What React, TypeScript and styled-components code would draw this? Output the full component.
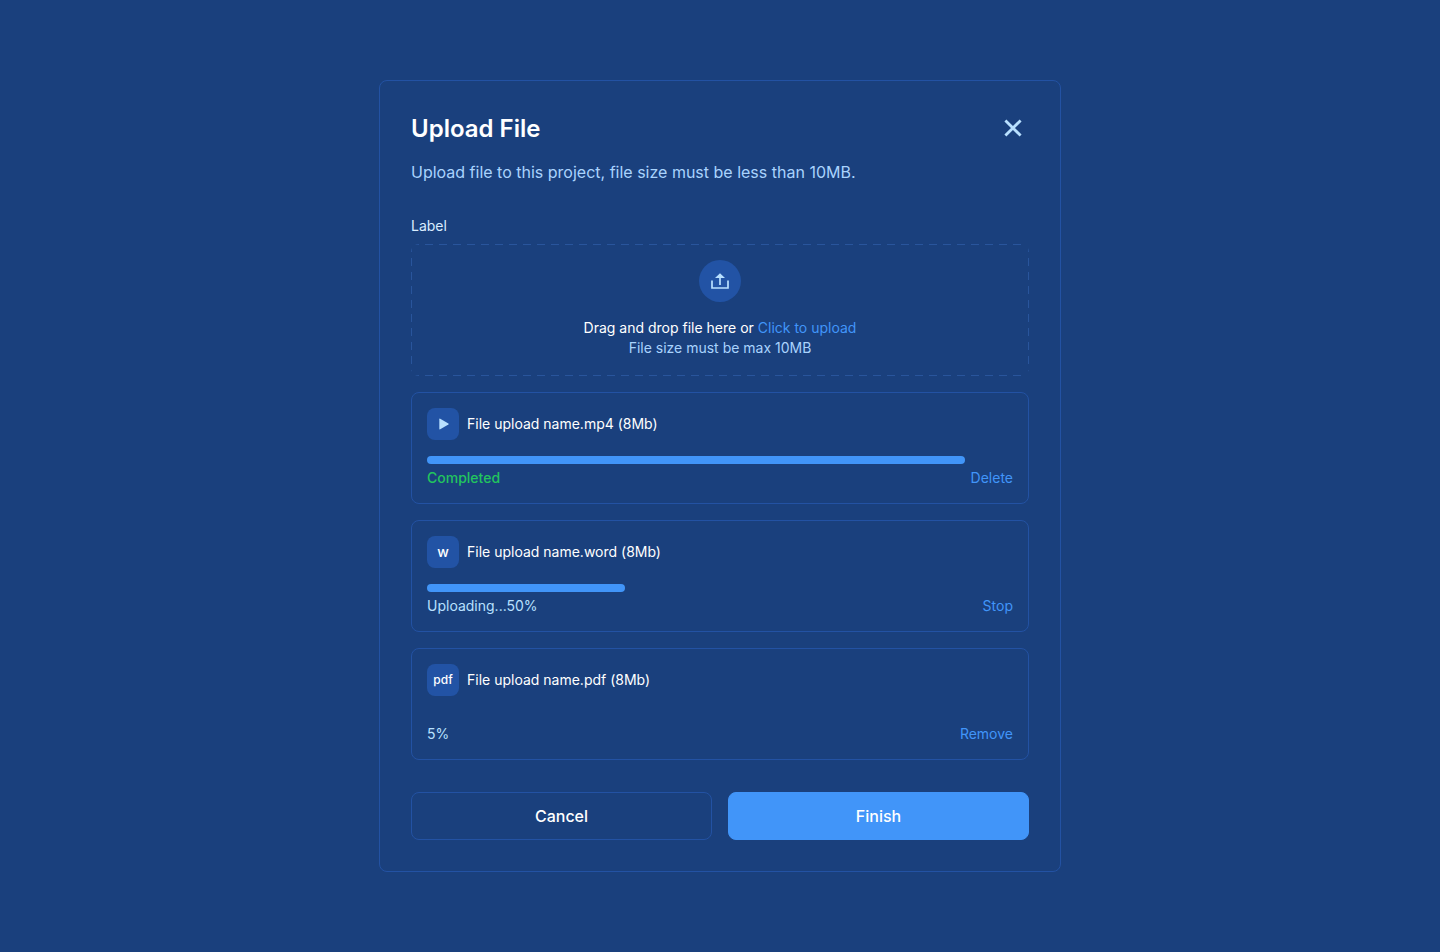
import React from "react";
import styled, { createGlobalStyle } from "styled-components";

const color = {
  page: "#1a407d",
  line: "#2352a3",
  dash: "#29559c",
  tile: "#2253a5",
  accent: "#4195f9",
  soft: "#a9d3fd",
  icon: "#b8e0ff",
  pale: "#d9edff",
  success: "#22c55e",
  white: "#ffffff",
};

const GlobalStyle = createGlobalStyle`
  *, *::before, *::after { box-sizing: border-box; }
  body {
    margin: 0;
    background: ${color.page};
    color: ${color.white};
    font-family: Inter, "Liberation Sans", sans-serif;
    font-size: 14px;
    line-height: 20px;
  }
  button { font: inherit; cursor: pointer; }
`;

const Page = styled.main`
  display: flex;
  align-items: center;
  justify-content: center;
  min-height: 100vh;
  padding: 16px;
`;

const Dialog = styled.section`
  display: flex;
  flex-direction: column;
  gap: 32px;
  width: 100%;
  max-width: 682px;
  padding: 31px;
  border: 1px solid ${color.line};
  border-radius: 8px;
`;

const Header = styled.header`
  display: flex;
  flex-direction: column;
  gap: 14px;
`;

const TitleRow = styled.div`
  display: flex;
  align-items: flex-start;
  justify-content: space-between;
`;

const Title = styled.h1`
  margin: 0;
  font-size: 24px;
  line-height: 34px;
  font-weight: 600;
`;

const CloseButton = styled.button`
  display: flex;
  width: 32px;
  height: 32px;
  padding: 0;
  border: 0;
  background: none;
  color: ${color.icon};
`;

const Subtitle = styled.p`
  margin: 0;
  font-size: 16px;
  line-height: 24px;
  color: ${color.soft};
`;

const Content = styled.div`
  display: flex;
  flex-direction: column;
  gap: 16px;
`;

const Field = styled.div`
  display: flex;
  flex-direction: column;
  gap: 8px;
`;

const FieldLabel = styled.span`
  color: ${color.pale};
`;

const dashX = `repeating-linear-gradient(90deg, ${color.dash} 0 8px, transparent 8px 14px)`;
const dashY = `repeating-linear-gradient(180deg, ${color.dash} 0 8px, transparent 8px 14px)`;

const DropZone = styled.div`
  display: flex;
  flex-direction: column;
  align-items: center;
  gap: 16px;
  padding: 16px 16px 18px;
  border-radius: 8px;
  background-image: ${dashX}, ${dashX}, ${dashY}, ${dashY};
  background-position: top, bottom, left, right;
  background-size: 100% 1px, 100% 1px, 1px 100%, 1px 100%;
  background-repeat: no-repeat;
  text-align: center;
`;

const UploadBadge = styled.span`
  display: flex;
  align-items: center;
  justify-content: center;
  width: 42px;
  height: 42px;
  border-radius: 50%;
  background: ${color.tile};
  color: ${color.icon};
`;

const DropText = styled.p`
  margin: 0;
`;

const Hint = styled.p`
  margin: 0;
  color: ${color.soft};
`;

const TextButton = styled.button`
  padding: 0;
  border: 0;
  background: none;
  color: ${color.accent};
`;

const FileList = styled.ul`
  display: flex;
  flex-direction: column;
  gap: 16px;
  margin: 0;
  padding: 0;
  list-style: none;
`;

const FileCard = styled.li`
  padding: 15px;
  border: 1px solid ${color.line};
  border-radius: 8px;
`;

const FileHead = styled.div`
  display: flex;
  align-items: center;
  gap: 8px;
  margin-bottom: 16px;
`;

const FileTile = styled.span<{ $large?: boolean }>`
  display: flex;
  align-items: center;
  justify-content: center;
  width: 32px;
  height: 32px;
  border-radius: 8px;
  background: ${color.tile};
  color: ${color.white};
  font-size: ${(p) => (p.$large ? "14px" : "12px")};
  font-weight: 500;
`;

const Track = styled.div`
  height: 8px;
  margin-bottom: 4px;
`;

const Bar = styled.div`
  height: 8px;
  border-radius: 4px;
  background: ${color.accent};
`;

const FileFoot = styled.div`
  display: flex;
  justify-content: space-between;
`;

const Status = styled.span<{ $done: boolean }>`
  font-weight: ${(p) => (p.$done ? 500 : 400)};
  color: ${(p) => (p.$done ? color.success : color.icon)};
`;

const Actions = styled.footer`
  display: grid;
  grid-template-columns: 1fr 1fr;
  gap: 16px;
`;

const ActionButton = styled.button<{ $primary?: boolean }>`
  height: 48px;
  border: 1px solid ${(p) => (p.$primary ? color.accent : color.line)};
  border-radius: 8px;
  background: ${(p) => (p.$primary ? color.accent : "transparent")};
  color: ${color.white};
  font-size: 16px;
  font-weight: 500;
`;

const CloseIcon = () => (
  <svg width="32" height="32" viewBox="0 0 32 32" fill="none" stroke="currentColor" strokeWidth="2.8" aria-hidden="true">
    <path d="M8.4 8.4 23.6 23.6M23.6 8.4 8.4 23.6" />
  </svg>
);

const UploadIcon = () => (
  <svg width="20" height="20" viewBox="0 0 20 20" aria-hidden="true">
    <path d="M2 9.6V17H18V9.6" fill="none" stroke="currentColor" strokeWidth="1.7" />
    <path d="M10 14V5" fill="none" stroke="currentColor" strokeWidth="1.7" />
    <path d="M5 6.9 10 2.3 15 6.9Z" fill="currentColor" />
  </svg>
);

const PlayIcon = () => (
  <svg width="16" height="16" viewBox="0 0 16 16" fill={color.icon} aria-hidden="true">
    <path d="M4.3 3.2a.6.6 0 0 1 .9-.5L13.4 7.5a.6.6 0 0 1 0 1L5.2 13.3a.6.6 0 0 1-.9-.5Z" />
  </svg>
);

interface UploadItem {
  name: string;
  tile: React.ReactNode;
  largeTile?: boolean;
  filled: number;
  status: string;
  action: string;
  done?: boolean;
}

const files: UploadItem[] = [
  { name: "File upload name.mp4 (8Mb)", tile: <PlayIcon />, filled: 91.8, status: "Completed", action: "Delete", done: true },
  { name: "File upload name.word (8Mb)", tile: "w", largeTile: true, filled: 33.8, status: "Uploading...50%", action: "Stop" },
  { name: "File upload name.pdf (8Mb)", tile: "pdf", filled: 0, status: "5%", action: "Remove" },
];

export default function App() {
  return (
    <>
      <GlobalStyle />
      <Page>
        <Dialog role="dialog" aria-labelledby="dialog-title">
          <Header>
            <TitleRow>
              <Title id="dialog-title">Upload File</Title>
              <CloseButton type="button" aria-label="Close">
                <CloseIcon />
              </CloseButton>
            </TitleRow>
            <Subtitle>Upload file to this project, file size must be less than 10MB.</Subtitle>
          </Header>
          <Content>
            <Field>
              <FieldLabel id="drop-label">Label</FieldLabel>
              <DropZone role="group" aria-labelledby="drop-label">
                <UploadBadge>
                  <UploadIcon />
                </UploadBadge>
                <div>
                  <DropText>
                    Drag and drop file here or <TextButton type="button">Click to upload</TextButton>
                  </DropText>
                  <Hint>File size must be max 10MB</Hint>
                </div>
              </DropZone>
            </Field>
            <FileList>
              {files.map((file) => (
                <FileCard key={file.name}>
                  <FileHead>
                    <FileTile $large={file.largeTile}>{file.tile}</FileTile>
                    <span>{file.name}</span>
                  </FileHead>
                  <Track>{file.filled > 0 && <Bar style={{ width: `${file.filled}%` }} />}</Track>
                  <FileFoot>
                    <Status $done={Boolean(file.done)}>{file.status}</Status>
                    <TextButton type="button">{file.action}</TextButton>
                  </FileFoot>
                </FileCard>
              ))}
            </FileList>
          </Content>
          <Actions>
            <ActionButton type="button">Cancel</ActionButton>
            <ActionButton type="button" $primary>
              Finish
            </ActionButton>
          </Actions>
        </Dialog>
      </Page>
    </>
  );
}
